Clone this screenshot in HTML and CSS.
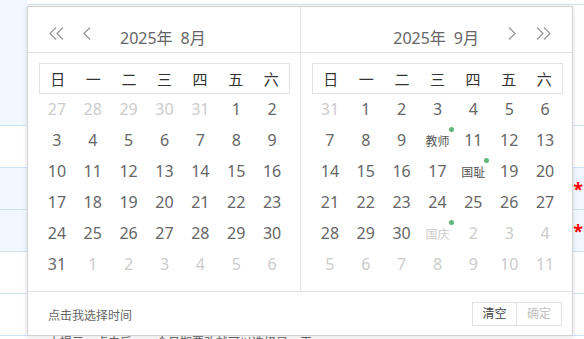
FILE: index.html
```html
<!DOCTYPE html>
<html>
<head>
    <meta charset="utf-8">
    <title>日期范围选择</title>
    <link rel="stylesheet" href="styles.css">
</head>
<body>
    <div class="page">
        <div class="table-top">
            <div class="side"></div>
            <div class="main"></div>
        </div>
        <div class="row"></div>
        <div class="row hl"><span class="req">*</span></div>
        <div class="row hl"><span class="req">*</span></div>
        <div class="row"></div>
        <div class="row tip">
            <span class="tip-text">小提示：点击后，一个日期要改就可以选择另一天</span>
        </div>

        <div class="laydate">
            <div class="panels">
                <div class="panel">
                    <div class="header">
                        <svg class="icon" width="17" height="13" viewBox="0 0 17 13"><path d="M8 .5L2 6.5l6 6M15 .5L9 6.5l6 6"/></svg>
                        <svg class="icon prev" width="10" height="13" viewBox="0 0 10 13"><path d="M8 .5L2 6.5l6 6"/></svg>
                        <div class="title title-left"><span>2025年</span><span>8月</span></div>
                    </div>
                    <div class="body">
                        <div class="week"><span>日</span><span>一</span><span>二</span><span>三</span><span>四</span><span>五</span><span>六</span></div>
                        <div class="days" id="daysLeft"></div>
                    </div>
                </div>
                <div class="panel">
                    <div class="header header-right">
                        <div class="title"><span>2025年</span><span>9月</span></div>
                        <svg class="icon next" width="10" height="13" viewBox="0 0 10 13"><path d="M2 .5l6 6-6 6"/></svg>
                        <svg class="icon next-year" width="17" height="13" viewBox="0 0 17 13"><path d="M2 .5l6 6-6 6M9 .5l6 6-6 6"/></svg>
                    </div>
                    <div class="body">
                        <div class="week"><span>日</span><span>一</span><span>二</span><span>三</span><span>四</span><span>五</span><span>六</span></div>
                        <div class="days" id="daysRight"></div>
                    </div>
                </div>
            </div>
            <div class="footer">
                <span class="hint">点击我选择时间</span>
                <div class="btns">
                    <span class="btn">清空</span>
                    <span class="btn disabled">确定</span>
                </div>
            </div>
        </div>
    </div>

    <script>
        // festival marks shown instead of the day number
        const marks = {
            '2025-9-10': '教师',
            '2025-9-18': '国耻',
            '2025-10-1': '国庆'
        };

        function renderMonth(grid, year, month) {
            const first = new Date(year, month - 1, 1);
            for (let i = 0; i < 42; i++) {
                const d = new Date(year, month - 1, 1 - first.getDay() + i);
                const cell = document.createElement('div');
                cell.className = 'day';
                if (d.getMonth() !== month - 1) {
                    cell.classList.add('other');
                }
                const key = d.getFullYear() + '-' + (d.getMonth() + 1) + '-' + d.getDate();
                if (marks[key]) {
                    cell.innerHTML = '<span class="mark">' + marks[key] + '</span>';
                } else {
                    cell.textContent = d.getDate();
                }
                grid.appendChild(cell);
            }
        }

        renderMonth(document.getElementById('daysLeft'), 2025, 8);
        renderMonth(document.getElementById('daysRight'), 2025, 9);
    </script>
</body>
</html>
```

FILE: styles.css
```css
body {
    margin: 0;
    font-family: "Noto Sans", "Noto Sans CJK SC", sans-serif;
    color: #666;
    background: #fff;
}
.page {
    position: relative;
    height: 339px;
    overflow: hidden;
}

/* table behind the picker */
.table-top {
    display: flex;
    height: 125px;
    border-bottom: 1px solid #cfe3f6;
}
.table-top .side {
    width: 27px;
    background: #f0f7ff;
}
.table-top .main {
    flex: 1;
    margin-top: 4px;
    border-top: 1px solid #cfe3f6;
}
.row {
    height: 41px;
    border-bottom: 1px solid #cfe3f6;
    display: flex;
    justify-content: flex-end;
    align-items: center;
}
.row.hl {
    background: #f0f7ff;
}
.req {
    color: #f00;
    font-size: 18px;
    font-weight: bold;
    margin-right: 1px;
}
.row.tip {
    justify-content: flex-start;
    align-items: flex-start;
}
.tip-text {
    padding: 41px 0 0 48px;
    font-size: 12px;
    line-height: 16px;
}

/* picker */
.laydate {
    position: absolute;
    left: 27px;
    top: 6px;
    width: 546px;
    height: 330px;
    box-sizing: border-box;
    border: 1px solid #d2d2d2;
    background: #fff;
    box-shadow: 0 1px 5px rgba(0,0,0,0.12);
    display: flex;
    flex-direction: column;
}
.panels {
    display: flex;
    flex: 1;
}
.panel {
    width: 272px;
}
.panel + .panel {
    flex: 1;
    border-left: 1px solid #e2e2e2;
}
.header {
    height: 45px;
    border-bottom: 1px solid #e2e2e2;
    display: flex;
    align-items: flex-start;
    padding-left: 20px;
}
.header-right {
    justify-content: flex-end;
    padding: 0 20px 0 0;
}
.icon {
    margin-top: 20px;
    fill: none;
    stroke: #999;
    stroke-width: 1.3;
}
.prev {
    margin-left: 17px;
}
.next {
    margin-left: 28px;
}
.next-year {
    margin-left: 18px;
}
.title {
    margin-top: 21px;
    font-size: 16px;
    line-height: 20px;
    color: #666;
    display: flex;
    gap: 8px;
}
.title-left {
    margin-left: 28px;
}
.body {
    padding: 10px 0 0 11px;
}
.week {
    width: 251px;
    height: 31px;
    box-sizing: border-box;
    border: 1px solid #e2e2e2;
    display: grid;
    grid-template-columns: repeat(7, 1fr);
    align-items: center;
    text-align: center;
    font-size: 15px;
    color: #333;
}
.days {
    width: 251px;
    display: grid;
    grid-template-columns: repeat(7, 1fr);
    grid-auto-rows: 31px;
    align-items: center;
    text-align: center;
    font-size: 16px;
    line-height: 31px;
}
.day.other {
    color: #ccc;
}
.mark {
    position: relative;
    font-size: 12px;
    line-height: 16px;
    color: #555;
}
.other .mark {
    color: #ccc;
}
.mark::after {
    content: '';
    position: absolute;
    right: -4px;
    top: -6px;
    width: 5px;
    height: 5px;
    border-radius: 50%;
    background: #5fb878;
}

.footer {
    height: 43px;
    border-top: 1px solid #e2e2e2;
    display: flex;
    align-items: center;
    padding: 0 10px 0 20px;
}
.hint {
    flex: 1;
    font-size: 12px;
    padding-top: 3px;
}
.btns {
    display: flex;
}
.btn {
    width: 45px;
    height: 24px;
    box-sizing: border-box;
    border: 1px solid #e2e2e2;
    font-size: 12px;
    line-height: 22px;
    text-align: center;
    color: #444;
}
.btn + .btn {
    margin-left: -1px;
    width: 46px;
}
.btn.disabled {
    color: #c2c2c2;
}
```
